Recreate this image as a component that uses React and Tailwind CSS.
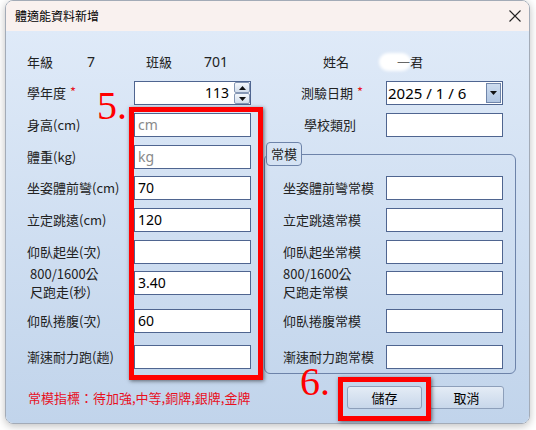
import React from 'react';

const labelFont = "font-['Noto_Sans_CJK_TC','Noto_Sans',sans-serif]";
const valueFont = "font-['Noto_Sans','Noto_Sans_CJK_TC',sans-serif]";

const leftRows = [
  { label: '身高(cm)', placeholder: 'cm', mt: 'mt-[8px]' },
  { label: '體重(kg)', placeholder: 'kg', mt: 'mt-[8px]' },
  { label: '坐姿體前彎(cm)', value: '70', mt: 'mt-[7px]' },
  { label: '立定跳遠(cm)', value: '120', mt: 'mt-[8px]' },
  { label: '仰臥起坐(次)', value: '', mt: 'mt-[8px]' },
  { label: ['800/1600公', '尺跑走(秒)'], value: '3.40', mt: 'mt-[7px]' },
  { label: '仰臥捲腹(次)', value: '60', mt: 'mt-[14px]' },
  { label: '漸速耐力跑(趟)', value: '', mt: 'mt-[12px]' },
];

const normRows = [
  { label: '坐姿體前彎常模', mt: '' },
  { label: '立定跳遠常模', mt: 'mt-[8px]' },
  { label: '仰臥起坐常模', mt: 'mt-[8px]' },
  { label: ['800/1600公', '尺跑走常模'], mt: 'mt-[7px]' },
  { label: '仰臥捲腹常模', mt: 'mt-[14px]' },
  { label: '漸速耐力跑常模', mt: 'mt-[12px]' },
];

const TextBox = ({ value, placeholder, className = 'w-[117px]' }) => (
  <div className={`${className} h-[24px] shrink-0 bg-white border border-[#4f6590] flex items-center pl-[3px] ${valueFont} text-[14px] leading-[18px]`}>
    {value ? <span className="text-black">{value}</span> : <span className="text-[#8a8a8a]">{placeholder}</span>}
  </div>
);

const Label = ({ label, indent }) =>
  Array.isArray(label) ? (
    <div className={`flex-1 flex flex-col leading-[18px] ${indent ? 'pl-[3px]' : ''}`}>
      <span>{label[0]}</span>
      <span>{label[1]}</span>
    </div>
  ) : (
    <div className="flex-1 leading-[18px]">{label}</div>
  );

const Star = () => <span className="text-[#e8101e] ml-[4px] relative -top-[1px]">*</span>;

const Triangle = ({ up }) => (
  <svg width="7" height="4" viewBox="0 0 7 4">
    <path d={up ? 'M0 4 L3.5 0 L7 4 Z' : 'M0 0 L3.5 4 L7 0 Z'} fill="#111" />
  </svg>
);

const Spinner = () => (
  <div className={`w-[117px] h-[24px] bg-white border border-[#4f6590] flex ${valueFont} text-[14px] leading-[18px]`}>
    <div className="flex-1 flex items-center justify-end pr-[5px] text-black">113</div>
    <div className="w-[16px] flex flex-col">
      <div className="h-[11px] border border-[#8597b4] rounded-[2px] bg-linear-to-b from-[#f4f7fb] to-[#d3deec] flex items-center justify-center">
        <Triangle up />
      </div>
      <div className="h-[11px] border border-[#8597b4] rounded-[2px] bg-linear-to-b from-[#f4f7fb] to-[#d3deec] flex items-center justify-center">
        <Triangle />
      </div>
    </div>
  </div>
);

const DateBox = () => (
  <div className={`w-[117px] h-[24px] bg-white border border-[#4f6590] flex items-center ${valueFont} text-[15px] leading-[18px]`}>
    <div className="flex-1 pl-[1px] text-black whitespace-pre">2025 / 1 / 6</div>
    <div className="w-[15px] h-[20px] mr-[1px] border border-[#6f85aa] bg-linear-to-b from-[#cddcef] to-[#b1c6e2] flex items-center justify-center">
      <Triangle />
    </div>
  </div>
);

const Button = ({ children }) => (
  <button className="w-[75px] h-[23px] rounded-[3px] border border-[#8d9fba] bg-linear-to-b from-[#e4ecf6] to-[#c8d7ea] text-[13px] leading-[18px] text-black">
    {children}
  </button>
);

export default function App() {
  return (
    <div className={`relative w-[536px] h-[430px] overflow-hidden bg-white ${labelFont} text-[13px] text-[#222]`}>
      <div className="ml-[5px] w-[525px] h-[424px] border border-[#a3abb7] rounded-[8px] overflow-hidden shadow-[0_2px_8px_rgba(0,0,0,0.25)] flex flex-col">
        <div className="h-[30px] shrink-0 bg-[#f9f1ef] flex items-center justify-between pl-[9px] pr-[8px]">
          <span className="text-[12px] leading-[16px] text-black">體適能資料新增</span>
          <svg width="12" height="12" viewBox="0 0 12 12">
            <path d="M0.5 0.5 L11.5 11.5 M11.5 0.5 L0.5 11.5" stroke="#222" strokeWidth="1.1" />
          </svg>
        </div>

        <div className="flex-1 bg-linear-to-b from-[#dfeaf8] to-[#c1d4eb] flex flex-col pl-[21px]">
          <div className="mt-[21px] h-[20px] flex items-center leading-[18px]">
            <span className="w-[60px]">年級</span>
            <span className={`w-[59px] ${valueFont} text-[14px]`}>7</span>
            <span className="w-[58px]">班級</span>
            <span className={`w-[119px] ${valueFont} text-[14px]`}>701</span>
            <span className="w-[56px]">姓名</span>
            <span className="flex items-center">
              <span className="w-[32px] h-[18px] rounded-full bg-white blur-[1.5px]" />
              <span className="relative -ml-[14px] text-[#666]">一</span>
              <span className="relative">君</span>
            </span>
          </div>

          <div className="mt-[9px] flex">
            <div className="w-[224px] flex flex-col">
              <div className="h-[24px] flex items-center">
                <div className="flex-1 leading-[18px]">
                  學年度<Star />
                </div>
                <Spinner />
              </div>
              {leftRows.map((row, i) => (
                <div key={i} className={`h-[24px] flex items-center ${row.mt}`}>
                  <Label label={row.label} indent />
                  <TextBox value={row.value} placeholder={row.placeholder} />
                </div>
              ))}
            </div>

            <div className="ml-[13px] w-[252px] flex flex-col">
              <div className="h-[24px] flex items-center pl-[37px] pr-[13px]">
                <div className="flex-1 leading-[18px]">
                  測驗日期<Star />
                </div>
                <DateBox />
              </div>
              <div className="mt-[8px] h-[24px] flex items-center pl-[40px] pr-[13px]">
                <div className="flex-1 leading-[18px]">學校類別</div>
                <TextBox />
              </div>
              <fieldset className="mt-[5px] border border-[#6d83a9] rounded-[6px]">
                <legend className="ml-[1px] h-[24px] px-[4px] border border-[#6d83a9] rounded-[4px] leading-[22px]">常模</legend>
                <div className="pt-[10px] pl-[18px] pr-[12px] pb-[4px] flex flex-col">
                  {normRows.map((row, i) => (
                    <div key={i} className={`h-[24px] flex items-center ${row.mt}`}>
                      <Label label={row.label} />
                      <TextBox />
                    </div>
                  ))}
                </div>
              </fieldset>
            </div>
          </div>

          <div className="mt-[12px] h-[23px] flex items-center pl-[1px] pr-[25px]">
            <span className="flex-1 text-[#e8101e] leading-[18px]">常模指標：待加強,中等,銅牌,銀牌,金牌</span>
            <div className="flex gap-[7px]">
              <Button>儲存</Button>
              <Button>取消</Button>
            </div>
          </div>
        </div>
      </div>

      {/* annotation marks drawn over the dialog */}
      <div className="absolute left-[129px] top-[107px] w-[134px] h-[273px] border-[5px] border-[#ff0000] shadow-[1px_1px_4px_rgba(0,0,0,0.55)]" />
      <div className="absolute left-[97px] top-[94px] font-['Liberation_Serif',serif] text-[40px] leading-[24px] text-[#ff0000]">5.</div>
      <div className="absolute left-[338px] top-[377px] w-[93px] h-[44px] border-[5px] border-[#ff0000] shadow-[1px_1px_4px_rgba(0,0,0,0.55)]" />
      <div className="absolute left-[300px] top-[370px] font-['Liberation_Serif',serif] text-[40px] leading-[24px] text-[#ff0000]">6.</div>
    </div>
  );
}
